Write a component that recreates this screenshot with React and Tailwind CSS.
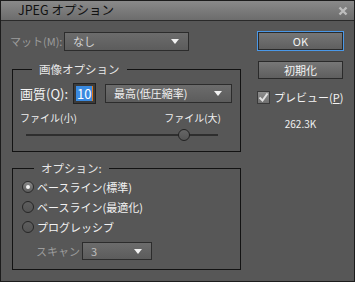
import React from "react";

const Arrow = () => (
  <svg width="8" height="5" viewBox="0 0 8 5" className="shrink-0">
    <path d="M0 0 H8 L4 5 Z" fill="#f2f2f2" />
  </svg>
);

const Select = ({ value, className = "", textClass = "text-[#f0f0f0]" }) => (
  <div
    className={`flex items-center justify-between border border-[#2c2c2c] bg-gradient-to-b from-[#6c6c6c] to-[#5c5c5c] pl-[8px] pr-[9px] ${className}`}
  >
    <span className={`text-[11px] leading-none whitespace-nowrap ${textClass}`}>{value}</span>
    <Arrow />
  </div>
);

const Radio = ({ checked, label }) => (
  <div className="flex items-center h-[20px]">
    <div
      className={`w-[12px] h-[12px] rounded-full border flex items-center justify-center ${
        checked
          ? "border-[#2a2a2a] bg-gradient-to-b from-[#8a8a8a] to-[#5c5c5c]"
          : "border-[#262626] bg-gradient-to-b from-[#5e5e5e] to-[#545454]"
      }`}
    >
      {checked && <div className="w-[4px] h-[4px] rounded-full bg-[#f4f4f4]" />}
    </div>
    <span className="ml-[3px] text-[11px] leading-none text-[#f2f2f2] whitespace-nowrap">{label}</span>
  </div>
);

export default function App() {
  return (
    <div className="w-[355px] h-[282px] bg-[#575757] border border-[#1c1c1c] flex flex-col font-['Noto_Sans_CJK_JP',sans-serif] select-none">
      {/* title bar */}
      <div className="h-[20px] shrink-0 border-b border-[#2a2a2a] bg-gradient-to-b from-[#8a8a8a] to-[#6c6c6c] flex items-center justify-between pl-[17px] pr-[6px]">
        <span className="text-[12.5px] leading-none text-[#111]">JPEG オプション</span>
        <svg width="10" height="10" viewBox="0 0 10 10">
          <path d="M1.5 1.5 L8.5 8.5 M8.5 1.5 L1.5 8.5" stroke="#bdbdbd" strokeWidth="2.4" />
        </svg>
      </div>

      <div className="flex flex-1">
        {/* left column */}
        <div className="w-[240px] shrink-0 flex flex-col pt-[11px]">
          <div className="flex items-center h-[19px] pl-[9px]">
            <span className="w-[54px] text-[11px] leading-none text-[#9c9c9c]">マット(M):</span>
            <Select value="なし" className="w-[125px] h-[19px]" textClass="text-[#d4d4d4]" />
          </div>

          <fieldset className="ml-[11px] mt-[11px] w-[229px] h-[90px] border border-[#121212] px-[7px]">
            <legend className="ml-[12px] px-[7px] text-[11.5px] leading-[14px] text-[#e8e8e8]">画像オプション</legend>
            <div className="flex items-center mt-[7px]">
              <span className="w-[53px] text-[13px] leading-none text-[#f4f4f4]">画質(Q):</span>
              <div className="w-[23px] h-[21px] border border-[#222] bg-[#3b3b3b] flex items-center pl-[2px]">
                <span className="bg-[#3a8ae0] text-white text-[13px] leading-[15px] px-[1px]">10</span>
                <span className="w-[1px] h-[15px] bg-[#e07a1a]" />
              </div>
              <Select value="最高(低圧縮率)" className="ml-[9px] w-[127px] h-[19px]" />
            </div>
            <div className="flex justify-between w-[201px] mt-[9px]">
              <span className="text-[10px] leading-none text-[#f0f0f0]">ファイル(小)</span>
              <span className="text-[10px] leading-none text-[#f0f0f0]">ファイル(大)</span>
            </div>
            <div className="relative ml-[6px] mt-[6px] w-[192px] h-[12px]">
              <div className="absolute left-0 right-0 top-[5px] h-[2px] bg-[#2e2e2e]" />
              <div className="absolute left-[152px] top-0 w-[12px] h-[12px] rounded-full border border-[#222] bg-gradient-to-b from-[#666] to-[#555]" />
            </div>
          </fieldset>

          <fieldset className="ml-[11px] mt-[9px] w-[229px] h-[109px] border border-[#121212] px-[9px]">
            <legend className="ml-[12px] px-[7px] text-[11.5px] leading-[14px] text-[#e8e8e8]">オプション:</legend>
            <div className="flex flex-col mt-[2px]">
              <Radio checked label="ベースライン(標準)" />
              <Radio label="ベースライン(最適化)" />
              <Radio label="プログレッシブ" />
            </div>
            <div className="flex items-center mt-[5px] pl-[14px]">
              <span className="w-[46px] text-[11px] leading-none text-[#9c9c9c]">スキャン</span>
              <Select value="3" className="w-[70px] h-[18px]" textClass="text-[#bdbdbd]" />
            </div>
          </fieldset>
        </div>

        {/* right column */}
        <div className="flex flex-col pl-[16px] pt-[10px] w-[100px] box-content">
          <button className="w-[87px] h-[20px] border border-[#4a98e8] bg-gradient-to-b from-[#777] to-[#5e5e5e] shadow-[inset_0_0_0_1px_#2a2a2a] text-[11px] leading-none text-[#f4f4f4]">
            OK
          </button>
          <button className="ml-[1px] mt-[10px] w-[85px] h-[18px] border border-[#2a2a2a] bg-gradient-to-b from-[#777] to-[#5e5e5e] text-[11px] leading-none text-[#f4f4f4]">
            初期化
          </button>
          <div className="flex items-center mt-[11px] h-[15px]">
            <div className="shrink-0 w-[13px] h-[13px] border border-[#3a3a3a] bg-gradient-to-b from-[#8e8e8e] to-[#707070] flex items-center justify-center">
              <svg width="11" height="11" viewBox="0 0 11 11">
                <path d="M1.5 5.5 L4.5 8.5 L9.5 1.5" fill="none" stroke="#e2e2e2" strokeWidth="2" />
              </svg>
            </div>
            <span className="ml-[4px] text-[11px] leading-none text-[#f4f4f4] whitespace-nowrap">
              プレビュー(<span className="underline">P</span>)
            </span>
          </div>
          <div className="mt-[14px] w-[87px] text-center text-[10px] leading-none text-[#f0f0f0]">262.3K</div>
        </div>
      </div>
    </div>
  );
}
